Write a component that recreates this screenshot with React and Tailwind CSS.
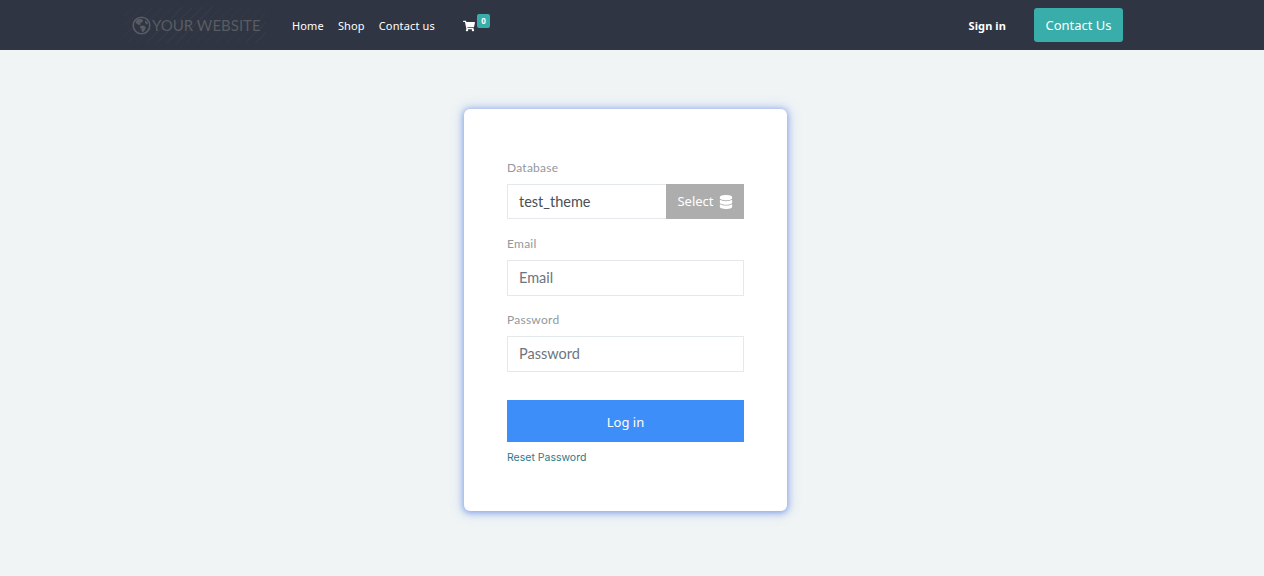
import { FaShoppingCart, FaDatabase } from 'react-icons/fa';

function Field({ label, placeholder }) {
  return (
    <div className="mb-[16px]">
      <label className="block h-[24px] text-[12px] tracking-[0.25px] leading-[16px] text-[#93989c] font-['Lato',sans-serif]">{label}</label>
      <input
        placeholder={placeholder}
        className="block w-full h-[36px] px-[11px] pb-[2px] border border-[#e4e9ec] bg-white text-[14.5px] font-['Lato',sans-serif] text-[#495057] placeholder:text-[#6c757d] outline-none"
      />
    </div>
  );
}

function Globe() {
  return (
    <svg width="19" height="19" viewBox="0 0 19 19" className="shrink-0">
      <circle cx="9.5" cy="9.5" r="8.3" fill="none" stroke="currentColor" strokeWidth="1.6" />
      <path d="M5 3.6 L8.6 2.8 L11 4 L10.4 6.2 L8.4 6.8 L8.8 8.4 L6.6 9 L4.6 7.6 L3.4 6.6 Z" fill="currentColor" />
      <path d="M8 10 L11.4 9.6 L13.8 11 L13.2 13.4 L11.4 16 L9.8 15.6 L9.4 12.8 L8 11.6 Z" fill="currentColor" />
      <path d="M13 4.4 L15.4 6 L16 8.4 L14.2 8 L13 6.4 Z" fill="currentColor" />
    </svg>
  );
}

export default function App() {
  return (
    <div className="min-h-[576px] bg-[#f0f4f5] font-['Noto_Sans',sans-serif]">
      <header className="h-[50px] bg-[#2f3542] flex items-center pl-[132px] pr-[141px]">
        <div className="w-[160px]">
          <a className="-ml-[8px] w-[142px] pl-[8px] py-[7px] flex items-center text-[#585c63] bg-[repeating-linear-gradient(135deg,transparent_0,transparent_6px,rgba(255,255,255,0.025)_6px,rgba(255,255,255,0.025)_7px)]">
            <Globe />
            <span className="ml-[1px] text-[15px] font-['Lato',sans-serif]">YOUR WEBSITE</span>
          </a>
        </div>
        <nav className="flex items-center gap-[14px] pt-[2px] text-[11px] tracking-[0.15px] text-white">
          <a>Home</a>
          <a>Shop</a>
          <a>Contact us</a>
        </nav>
        <div className="relative ml-[28px] mt-[2px] text-white">
          <FaShoppingCart className="text-[12px]" />
          <span className="absolute left-[14px] top-[-6px] w-[13px] h-[14px] rounded-[2px] bg-[#38ada9] text-[8px] font-bold leading-[14px] text-center">0</span>
        </div>
        <div className="ml-auto flex items-center gap-[28px]">
          <a className="pt-[2px] text-[11px] tracking-[0.1px] font-bold text-white">Sign in</a>
          <a className="h-[34px] w-[89px] pt-[1px] flex items-center justify-center rounded-[3px] bg-[#38ada9] text-white text-[13px]">Contact Us</a>
        </div>
      </header>
      <main className="flex justify-center pt-[59px] pr-[13px]">
        <div className="w-[323px] h-[402px] bg-white rounded-[6px] px-[43px] pt-[50px] shadow-[0_1px_6px_1px_rgba(60,110,225,0.55),0_0_12px_5px_rgba(70,120,225,0.1)]">
          <div className="mb-[17px]">
            <label className="block h-[25px] pt-[1px] text-[12px] tracking-[0.25px] leading-[16px] text-[#93989c] font-['Lato',sans-serif]">Database</label>
            <div className="flex h-[35px]">
              <div className="flex-1 border border-r-0 border-[#e4e9ec] px-[11px] flex items-center text-[14.5px] text-[#495057] font-['Lato',sans-serif]">test_theme</div>
              <button className="w-[78px] pt-[1px] bg-[#adadad] text-white text-[13px] flex items-center justify-center gap-[5px] font-['Noto_Sans',sans-serif]">
                Select <FaDatabase className="text-[14px]" />
              </button>
            </div>
          </div>
          <Field label="Email" placeholder="Email" />
          <Field label="Password" placeholder="Password" />
          <button className="block w-full h-[42px] mt-[28px] pt-[4px] bg-[#3d8ef8] text-white text-[13px]">Log in</button>
          <a className="block mt-[8px] text-[10.5px] leading-[16px] text-[#2b7a8c] font-['Inter',sans-serif]">Reset Password</a>
        </div>
      </main>
    </div>
  );
}
